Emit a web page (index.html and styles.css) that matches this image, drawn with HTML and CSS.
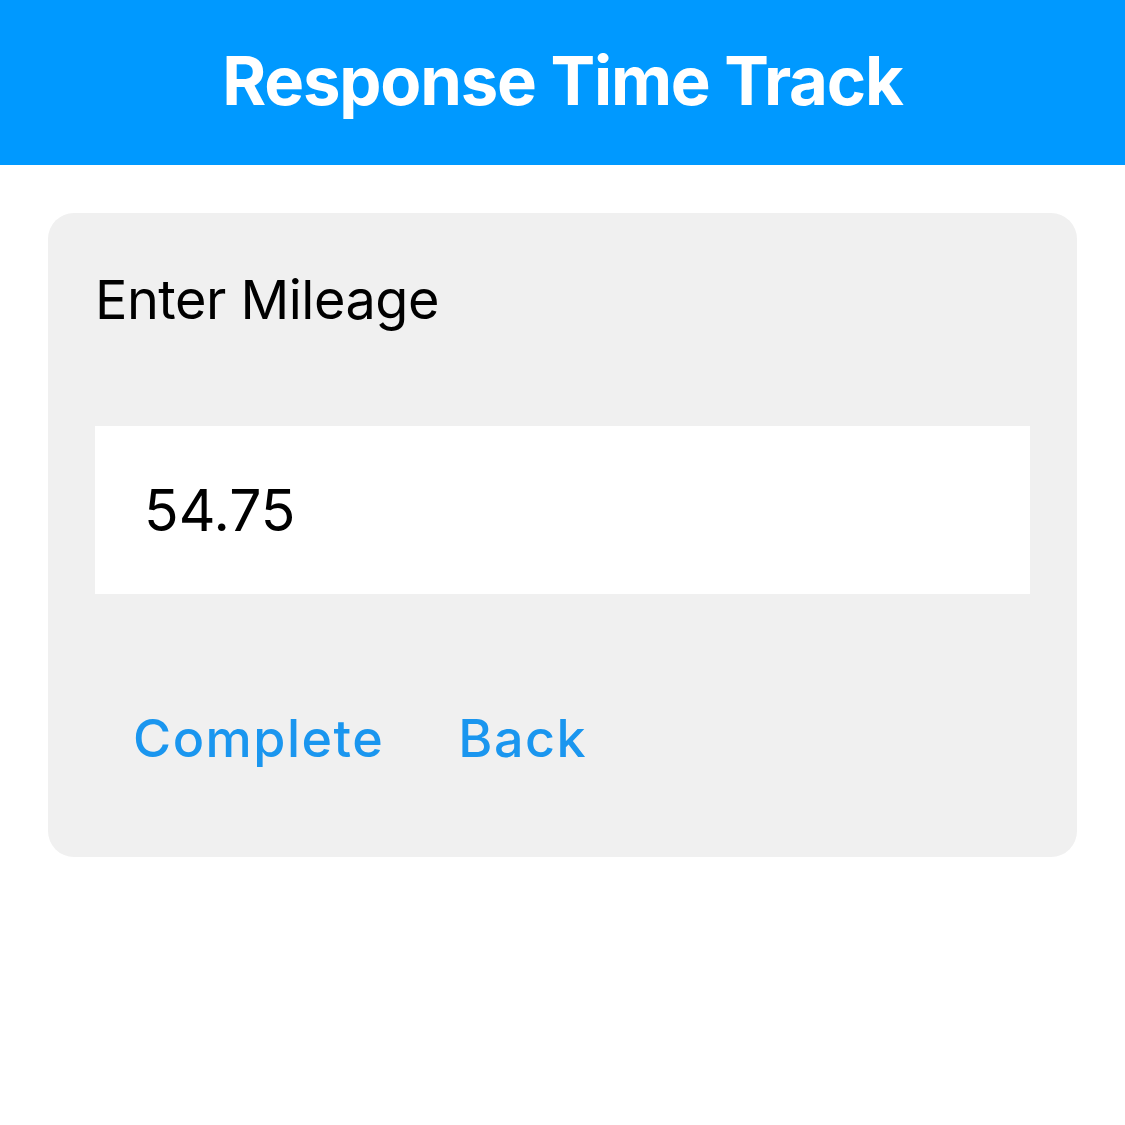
FILE: index.html
```html
<!DOCTYPE html>
<html>
<head>
<meta charset="utf-8">
<link rel="stylesheet" href="styles.css">
</head>
<body>
<header class="app-header">
  <h1 class="app-title">Response Time Track</h1>
</header>
<main class="content">
  <section class="card">
    <div class="card-label">Enter Mileage</div>
    <div class="input-box"><span class="input-value">54.75</span></div>
    <div class="actions">
      <button class="action">Complete</button>
      <button class="action">Back</button>
    </div>
  </section>
</main>
</body>
</html>
```
FILE: styles.css
```css
html, body {
  margin: 0;
  padding: 0;
  background: #ffffff;
  font-family: Inter, "Liberation Sans", sans-serif;
}
.app-header {
  height: 165px;
  background: #0099ff;
  display: flex;
  align-items: center;
  justify-content: center;
}
.app-title {
  margin: 0;
  color: #ffffff;
  font-size: 67px;
  font-weight: 700;
  letter-spacing: -1.2px;
  position: relative;
  top: -2px;
}
.content {
  padding: 48px 48px 0 48px;
}
.card {
  background: #f0f0f0;
  border-radius: 26px;
  height: 644px;
  box-sizing: border-box;
  padding: 0 47px;
  display: flex;
  flex-direction: column;
}
.card-label {
  margin-top: 52px;
  font-size: 54px;
  line-height: 70px;
  color: #000000;
  letter-spacing: -0.5px;
}
.input-box {
  margin-top: 91px;
  height: 168px;
  background: #ffffff;
  display: flex;
  align-items: center;
  padding-left: 49px;
}
.input-value {
  font-size: 57px;
  color: #000000;
}
.actions {
  margin-top: 115px;
  display: flex;
  gap: 74px;
  padding-left: 38px;
}
.action {
  background: none;
  border: none;
  padding: 0;
  font-family: Inter, "Liberation Sans", sans-serif;
  font-size: 52px;
  font-weight: 500;
  color: #1a96ef;
  letter-spacing: 1.5px;
  line-height: 60px;
}
```
